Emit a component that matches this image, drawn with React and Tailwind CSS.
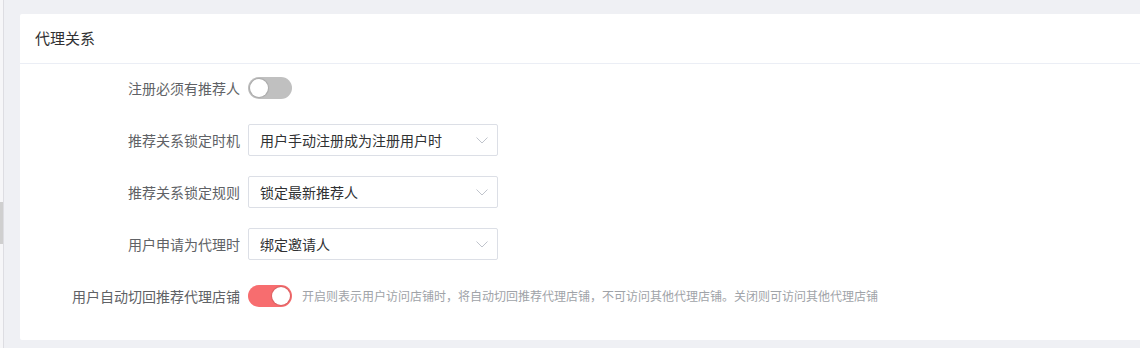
import React from "react";

function Chevron() {
  return (
    <svg width="12" height="7" viewBox="0 0 12 7" fill="none" className="shrink-0">
      <path d="M0.5 0.5 L6 6 L11.5 0.5" stroke="#c0c4cc" strokeWidth="1" />
    </svg>
  );
}

function Switch({ on }) {
  return (
    <div
      className={
        "relative w-[44px] h-[22px] rounded-full shrink-0 " +
        (on ? "bg-[#f76d6f]" : "bg-[#c0c0c0]")
      }
    >
      <div
        className={
          "absolute top-[2px] w-[18px] h-[18px] rounded-full bg-white shadow-[0_0_1px_1px_rgba(0,0,0,0.12)] " +
          (on ? "left-[24px]" : "left-[2px]")
        }
      />
    </div>
  );
}

function Select({ value }) {
  return (
    <div className="w-[250px] h-[32px] border border-[#dcdfe6] rounded-[2px] bg-white flex items-center justify-between pl-[11px] pr-[9px]">
      <span className="text-[14px] text-[#303133]">{value}</span>
      <Chevron />
    </div>
  );
}

function Row({ label, children }) {
  return (
    <div className="flex items-center h-[32px] mb-[20px]">
      <div className="w-[228px] pr-[8px] text-right text-[14px] text-[#606266] shrink-0">{label}</div>
      {children}
    </div>
  );
}

export default function App() {
  return (
    <div
      className="flex w-[1140px] h-[348px] bg-[#eff0f4] overflow-hidden"
      style={{ fontFamily: '"Noto Sans CJK SC", "Noto Sans", sans-serif' }}
    >
      <div className="w-[4px] shrink-0 bg-[#f6f6f8] border-r border-[#dddde2] pt-[202px]">
        <div className="w-[3px] h-[42px] bg-[#cfcfcf]" />
      </div>
      <div className="flex-1 pl-[16px] pt-[14px] pb-[8px]">
        <div className="bg-white h-[326px] rounded-l-[2px]">
          <div className="h-[50px] border-b border-[#ebeef5] flex items-center pl-[15px] text-[15px] text-[#303133]">
            代理关系
          </div>
          <div className="pt-[8px]">
            <Row label="注册必须有推荐人">
              <Switch on={false} />
            </Row>
            <Row label="推荐关系锁定时机">
              <Select value="用户手动注册成为注册用户时" />
            </Row>
            <Row label="推荐关系锁定规则">
              <Select value="锁定最新推荐人" />
            </Row>
            <Row label="用户申请为代理时">
              <Select value="绑定邀请人" />
            </Row>
            <Row label="用户自动切回推荐代理店铺">
              <Switch on={true} />
              <span className="ml-[10px] text-[12px] text-[#a0a3a8]">
                开启则表示用户访问店铺时，将自动切回推荐代理店铺，不可访问其他代理店铺。关闭则可访问其他代理店铺
              </span>
            </Row>
          </div>
        </div>
      </div>
    </div>
  );
}
